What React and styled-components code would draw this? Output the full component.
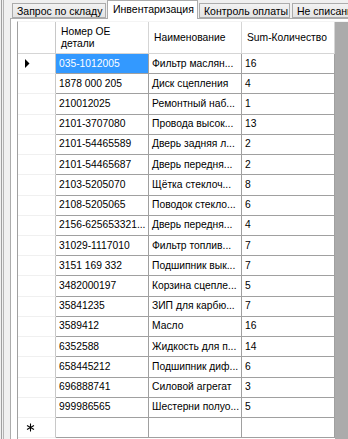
import React from "react";
import styled, { createGlobalStyle } from "styled-components";

const Global = createGlobalStyle`
  html, body { margin: 0; padding: 0; background: #f0f0f0; }
  body { font-family: "Liberation Sans", Arial, sans-serif; font-size: 10px; color: #000; }
`;

const Page = styled.div`
  width: 348px;
  height: 439px;
  overflow: hidden;
  display: flex;
  background: #f0f0f0;
`;

const EdgeOuter = styled.div`
  margin-left: 1px;
  border-left: 1px solid #a0a0a0;
  padding-left: 1px;
  display: flex;
`;

const EdgeInner = styled.div`
  border-left: 1px solid #b4b4b4;
  width: 6px;
`;

const TabControl = styled.div`
  flex: 1;
  display: flex;
  flex-direction: column;
  min-width: 0;
`;

const TabStrip = styled.div`
  height: 18px;
  display: flex;
  align-items: flex-end;
  padding-left: 2px;
  position: relative;
  z-index: 1;
`;

const Tab = styled.div`
  box-sizing: border-box;
  flex: none;
  width: ${(p) => p.$w}px;
  margin-left: ${(p) => p.$ml || 0}px;
  height: ${(p) => (p.$active ? 18 : 15)}px;
  border: 1px solid #acacac;
  border-bottom: ${(p) => (p.$active ? "none" : "1px solid #acacac")};
  background: ${(p) => (p.$active ? "#ffffff" : "linear-gradient(#f2f2f2, #e4e4e4)")};
  display: flex;
  align-items: center;
  padding: ${(p) => (p.$active ? "0 0 2px 5px" : "0 0 0 4px")};
  white-space: nowrap;
  overflow: hidden;
  font-size: 10.5px;
  margin-bottom: ${(p) => (p.$active ? "-1px" : "0")};
  height: ${(p) => (p.$active ? 19 : 15)}px;
`;

const Panel = styled.div`
  flex: 1;
  border-top: 1px solid #acacac;
  border-left: 1px solid #acacac;
  background: #ffffff;
  padding: 2px 0 0 6px;
  display: flex;
  min-height: 0;
`;

const GridFrame = styled.div`
  flex: 1;
  display: flex;
  border-top: 1px solid #f4f4f4;
  border-left: 1px solid #a0a0a0;
  border-bottom: 1px solid #a0a0a0;
  box-sizing: border-box;
  height: 419px;
  min-width: 0;
`;

const Table = styled.div`
  width: 317px;
  flex: none;
  display: flex;
  flex-direction: column;
  background: #fff;
`;

const Workspace = styled.div`
  flex: 1;
  background-color: #ababab;
  background-image: radial-gradient(#9f9f9f 0.6px, transparent 0.7px);
  background-size: 2px 2px;
`;

const Row = styled.div`
  display: grid;
  grid-template-columns: 38px 93px 93px 93px;
  height: ${(p) => (p.$header ? 32 : 20.22)}px;
  box-sizing: border-box;
  flex: none;
`;

const RowHead = styled.div`
  box-sizing: border-box;
  border-right: 1px solid #c8c8c8;
  border-bottom: 1px solid ${(p) => (p.$header ? "#d5d5d5" : "#f0f0f0")};
  display: flex;
  align-items: center;
  padding-left: 7px;
`;

const HeadCell = styled.div`
  box-sizing: border-box;
  border-right: 1px solid #d5d5d5;
  border-bottom: 1px solid #d5d5d5;
  display: flex;
  align-items: center;
  padding-left: 5px;
  line-height: 12px;
  font-size: 10.3px;
`;

const Cell = styled.div`
  box-sizing: border-box;
  border-right: 1px solid #a0a0a0;
  border-bottom: 1px solid #a0a0a0;
  display: flex;
  align-items: center;
  padding: 0 0 1px 3px;
  white-space: nowrap;
  overflow: hidden;
  font-size: 10.3px;
  background: ${(p) => (p.$selected ? "#3399ff" : "#ffffff")};
  color: ${(p) => (p.$selected ? "#ffffff" : "#000000")};
`;

const Arrow = () => (
  <svg width="5" height="9" viewBox="0 0 5 9">
    <path d="M0 0 L4.5 4.5 L0 9 Z" fill="#000" />
  </svg>
);

const Star = () => (
  <svg width="9" height="9" viewBox="0 0 9 9" style={{ marginLeft: 1 }}>
    <g stroke="#000" strokeWidth="1.1">
      <line x1="4.5" y1="0.5" x2="4.5" y2="8.5" />
      <line x1="1" y1="2.5" x2="8" y2="6.5" />
      <line x1="1" y1="6.5" x2="8" y2="2.5" />
    </g>
  </svg>
);

const rows = [
  ["035-1012005", "Фильтр маслян...", "16"],
  ["1878 000 205", "Диск сцепления", "4"],
  ["210012025", "Ремонтный наб...", "1"],
  ["2101-3707080", "Провода высок...", "13"],
  ["2101-54465589", "Дверь задняя л...", "2"],
  ["2101-54465687", "Дверь передня...", "2"],
  ["2103-5205070", "Щётка стеклоч...", "8"],
  ["2108-5205065", "Поводок стекло...", "6"],
  ["2156-625653321...", "Дверь передня...", "4"],
  ["31029-1117010", "Фильтр топлив...", "7"],
  ["3151 169 332", "Подшипник вык...", "7"],
  ["3482000197", "Корзина сцепле...", "5"],
  ["35841235", "ЗИП для карбю...", "7"],
  ["3589412", "Масло", "16"],
  ["6352588", "Жидкость для п...", "14"],
  ["658445212", "Подшипник диф...", "6"],
  ["696888741", "Силовой агрегат", "3"],
  ["999986565", "Шестерни полуо...", "5"],
];

export default function App() {
  return (
    <>
      <Global />
      <Page>
        <EdgeOuter>
          <EdgeInner />
        </EdgeOuter>
        <TabControl>
          <TabStrip>
            <Tab $w={94}>Запрос по складу</Tab>
            <Tab $w={91} $ml={1} $active>Инвентаризация</Tab>
            <Tab $w={91} $ml={1}>Контроль оплаты</Tab>
            <Tab $w={80} $ml={2}>Не списанные</Tab>
          </TabStrip>
          <Panel>
            <GridFrame>
              <Table>
                <Row $header>
                  <RowHead $header />
                  <HeadCell>Номер ОЕ<br />детали</HeadCell>
                  <HeadCell>Наименование</HeadCell>
                  <HeadCell>Sum-Количество</HeadCell>
                </Row>
                {rows.map((r, i) => (
                  <Row key={i}>
                    <RowHead>{i === 0 ? <Arrow /> : null}</RowHead>
                    <Cell $selected={i === 0}>{r[0]}</Cell>
                    <Cell>{r[1]}</Cell>
                    <Cell>{r[2]}</Cell>
                  </Row>
                ))}
                <Row>
                  <RowHead><Star /></RowHead>
                  <Cell />
                  <Cell />
                  <Cell />
                </Row>
              </Table>
              <Workspace />
            </GridFrame>
          </Panel>
        </TabControl>
      </Page>
    </>
  );
}
